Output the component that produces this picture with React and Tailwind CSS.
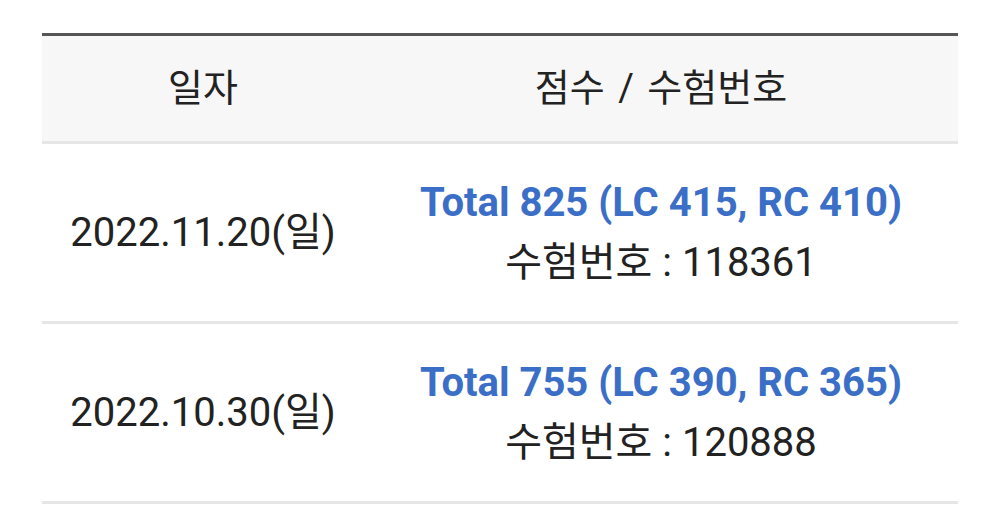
export default function App() {
  const rows = [
    { date: "2022.11.20(일)", total: "Total 825 (LC 415, RC 410)", no: "118361" },
    { date: "2022.10.30(일)", total: "Total 755 (LC 390, RC 365)", no: "120888" },
  ];
  return (
    <div className="w-[1000px] h-[525px] bg-white overflow-hidden px-[42px] pt-[33px] font-['Roboto','Noto_Sans_CJK_KR',sans-serif] text-[#222]">
      <div className="border-t-[3px] border-[#555555]">
        <div className="flex h-[108px] bg-[#f7f7f7] border-b-[3px] border-[#e6e6e6] items-center text-[38px]">
          <div className="w-[322px] text-center">일자</div>
          <div className="flex-1 text-center">점수<span className="px-[4px]"> / </span>수험번호</div>
        </div>
        {rows.map((r) => (
          <div key={r.no} className="flex h-[180px] border-b-[3px] border-[#e6e6e6] items-center">
            <div className="w-[322px] text-center text-[40px]">{r.date}</div>
            <div className="flex-1 text-center text-[40px] leading-[60px]">
              <div className="font-bold text-[#3b6fc7]">{r.total}</div>
              <div>수험번호 : {r.no}</div>
            </div>
          </div>
        ))}
      </div>
    </div>
  );
}
